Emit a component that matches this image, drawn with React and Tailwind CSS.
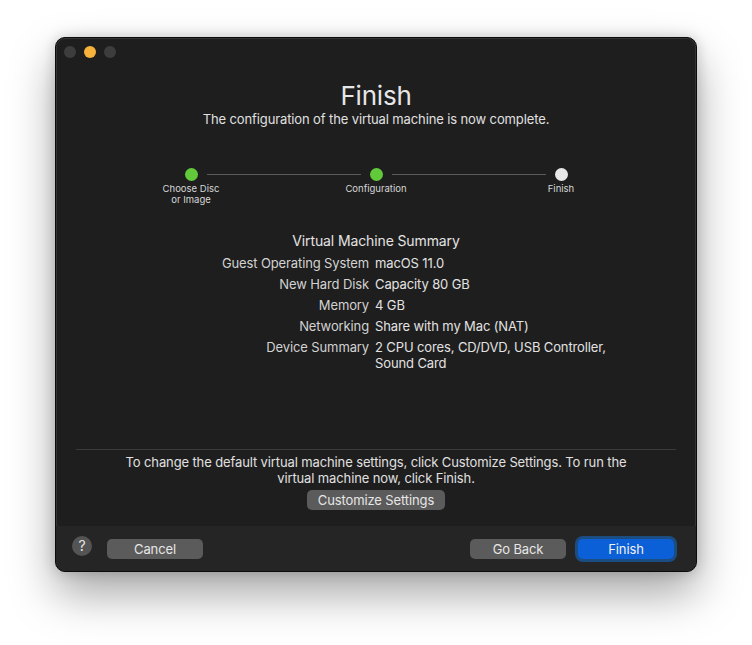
import React from 'react';

const FONT = { fontFamily: 'Inter, "Noto Sans", "Liberation Sans", sans-serif' };

const SUMMARY = [
  ['Guest Operating System', 'macOS 11.0'],
  ['New Hard Disk', 'Capacity 80 GB'],
  ['Memory', '4 GB'],
  ['Networking', 'Share with my Mac (NAT)'],
  ['Device Summary', <>2 CPU cores, CD/DVD, USB Controller,<br />Sound Card</>],
];

function Dot({ done }) {
  return (
    <div className={`w-[13px] h-[13px] rounded-full shrink-0 ${done ? 'bg-[#62c93a]' : 'bg-[#e8e8e8]'}`} />
  );
}

function Steps() {
  return (
    <div className="flex flex-col items-center mt-[41px]">
      <div className="flex items-center w-[383px]">
        <Dot done />
        <div className="flex-1 h-px bg-[#5a5a5a] mx-[9px]" />
        <Dot done />
        <div className="flex-1 h-px bg-[#5a5a5a] mx-[9px]" />
        <Dot />
      </div>
      <div className="flex justify-between w-[450px] mt-[2px] text-[9.5px] leading-[11px] tracking-normal text-[#d6d6d6]">
        <div className="w-[80px] text-center">Choose Disc<br />or Image</div>
        <div className="w-[80px] text-center">Configuration</div>
        <div className="w-[80px] text-center">Finish</div>
      </div>
    </div>
  );
}

function Btn({ children, className = '' }) {
  return (
    <button className={`h-[20px] rounded-[5px] bg-[#5b5b5b] text-[13px] leading-[20px] text-[#e6e6e6] ${className}`}>
      {children}
    </button>
  );
}

export default function App() {
  return (
    <div className="w-[752px] h-[645px] bg-white pl-[55px] pt-[37px] tracking-[-0.12px]" style={FONT}>
      <div className="w-[642px] h-[535px] rounded-[10px] bg-[#1e1e1e] border border-[#0b0b0b] shadow-[0_22px_45px_rgba(0,0,0,0.35),0_0_14px_rgba(0,0,0,0.18),inset_0_0_0_1px_rgba(255,255,255,0.1)] flex flex-col overflow-hidden">
        {/* title bar */}
        <div className="h-[28px] flex items-center pl-[8px] gap-[8px] shrink-0">
          <div className="w-[12px] h-[12px] rounded-full bg-[#3d3d3d]" />
          <div className="w-[12px] h-[12px] rounded-full bg-[#f7b23b]" />
          <div className="w-[12px] h-[12px] rounded-full bg-[#3d3d3d]" />
        </div>

        {/* main */}
        <div className="flex-1 flex flex-col items-center">
          <h1 className="mt-[15px] text-[26px] leading-[30px] text-[#e6e6e6] tracking-[-0.2px]">Finish</h1>
          <p className="text-[13px] leading-[16px] text-[#e0e0e0]">The configuration of the virtual machine is now complete.</p>

          <Steps />

          <h2 className="mt-[27px] text-[14px] leading-[18px] text-[#e3e3e3]">Virtual Machine Summary</h2>
          <div className="mt-[5px] w-full grid grid-cols-[313px_1fr] gap-x-[6px] gap-y-[5px] text-[13px] leading-[16px]">
            {SUMMARY.map(([k, v]) => (
              <React.Fragment key={k}>
                <div className="text-right text-[#d2d2d2]">{k}</div>
                <div className="text-[#e2e2e2]">{v}</div>
              </React.Fragment>
            ))}
          </div>
        </div>

        {/* bottom section */}
        <div className="h-[77px] shrink-0 flex flex-col items-center">
          <div className="w-[600px] h-px bg-[#3a3a3a]" />
          <p className="mt-[4px] text-[13px] leading-[16px] text-[#e0e0e0] text-center">
            To change the default virtual machine settings, click Customize Settings. To run the<br />
            virtual machine now, click Finish.
          </p>
          <Btn className="mt-[4px] w-[138px]">Customize Settings</Btn>
        </div>

        {/* footer */}
        <div className="h-[45px] shrink-0 bg-[#252525] flex items-center pl-[16px] pr-[22px]">
          <div className="w-[20px] h-[20px] rounded-full bg-[#545454] flex items-center justify-center text-[14px] leading-none text-[#e6e6e6] -mt-[5px]">?</div>
          <Btn className="ml-[15px] w-[96px]">Cancel</Btn>
          <div className="flex-1" />
          <Btn className="w-[96px]">Go Back</Btn>
          <button className="ml-[12px] w-[96px] h-[20px] rounded-[5px] bg-[#0b5fd7] text-[13px] leading-[20px] text-[#f2f2f2] shadow-[0_0_0_3px_#1b4d83]">
            Finish
          </button>
        </div>
      </div>
    </div>
  );
}
